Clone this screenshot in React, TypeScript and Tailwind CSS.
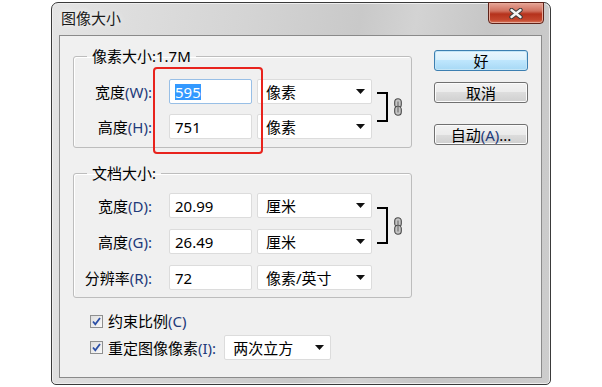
import React from 'react';

const Paren = ({ children }: { children: React.ReactNode }) => (
  <span className="text-[#1e3a7a]">{children}</span>
);

const Arrow = () => (
  <svg width="9" height="5" viewBox="0 0 9 5" className="shrink-0">
    <path d="M0 0 H9 L4.5 5 Z" fill="#111" />
  </svg>
);

const Select = ({ label, className }: { label: React.ReactNode; className: string }) => (
  <div
    className={
      'h-[25px] bg-white border border-[#dcdcdc] rounded-[2px] flex items-center justify-between pl-[8px] pr-[6px] text-[15px] leading-[20px] text-black ' +
      className
    }
  >
    <span>{label}</span>
    <Arrow />
  </div>
);

const Input = ({ value, focus }: { value: React.ReactNode; focus?: boolean }) => (
  <div
    className={
      'w-[83px] h-[25px] bg-white border rounded-[2px] flex items-center pl-[5px] text-[15px] leading-[20px] text-black ' +
      (focus ? 'border-[#98bfe6]' : 'border-[#dcdcdc]')
    }
  >
    {value}
  </div>
);

const Row = ({ label, value, unit, focus }: { label: React.ReactNode; value: React.ReactNode; unit: string; focus?: boolean }) => (
  <div className="flex items-center h-[25px]">
    <div className="w-[78px] text-right text-[15px] leading-[20px] whitespace-nowrap">{label}</div>
    <div className="ml-[17px]">
      <Input value={value} focus={focus} />
    </div>
    <Select label={unit} className="ml-[5px] w-[115px]" />
  </div>
);

const Link = () => (
  <svg width="8" height="18" viewBox="0 0 8 18" className="ml-[6px] shrink-0">
    <rect x="0.7" y="0.7" width="6.6" height="9" rx="3.3" fill="#c4c4c4" stroke="#4a4a4a" strokeWidth="1.1" />
    <rect x="0.7" y="8.3" width="6.6" height="9" rx="3.3" fill="#c4c4c4" stroke="#4a4a4a" strokeWidth="1.1" />
    <line x1="4" y1="3.5" x2="4" y2="14.5" stroke="#6a6a6a" strokeWidth="1.1" />
  </svg>
);

const Check = () => (
  <svg width="13" height="13" viewBox="0 0 13 13" className="shrink-0">
    <defs>
      <linearGradient id="cb" x1="0" y1="0" x2="1" y2="1">
        <stop offset="0" stopColor="#dcdcdc" />
        <stop offset="1" stopColor="#fbfbfb" />
      </linearGradient>
    </defs>
    <rect x="0.5" y="0.5" width="12" height="12" fill="url(#cb)" stroke="#8e8f8f" />
    <path d="M3 6.5 L5.3 9.3 L10 3" fill="none" stroke="#2b4fa6" strokeWidth="1.8" />
  </svg>
);

const Button = ({ children, primary, className }: { children: React.ReactNode; primary?: boolean; className?: string }) => (
  <div
    className={
      'h-[21px] w-[94px] rounded-[3px] border flex items-center justify-center text-[15px] leading-[20px] text-black ' +
      (primary
        ? 'border-[#3c7fb1] bg-[linear-gradient(#eaf6fd_0%,#d9f0fc_50%,#bee6fd_50%,#a7d9f5_100%)] shadow-[inset_0_0_0_1px_#c4e5f6] '
        : 'border-[#707070] bg-[linear-gradient(#f2f2f2_0%,#ebebeb_50%,#dddddd_50%,#cfcfcf_100%)] shadow-[inset_0_0_0_1px_#fbfbfb] ') +
      (className ?? '')
    }
  >
    {children}
  </div>
);

export default function App() {
  return (
    <div className="w-[602px] h-[387px] bg-white pl-[51px] pt-[2px] font-['Noto_Sans','Noto_Sans_CJK_SC',sans-serif] text-black">
      <div className="relative w-[500px] h-[383px] flex flex-col rounded-t-[7px] rounded-b-[5px] border border-[#3a3a3a] bg-[linear-gradient(100deg,#e4e4e4_0%,#d4d4d4_35%,#c9c9c9_55%,#d3d3d3_65%,#c6c6c6_78%,#cdcdcd_100%)] shadow-[inset_0_0_0_1px_#eeeeee]">
        {/* title bar */}
        <div className="h-[32px] flex items-start shrink-0">
          <div className="pl-[9px] pt-[5px] text-[15px] leading-[20px] text-[#1a1a1a] [text-shadow:0_0_6px_#ffffff]">图像大小</div>
          <div className="ml-auto mr-[6px] mt-[-1px] w-[56px] h-[22px] rounded-b-[4px] border border-[#5e2219] bg-[linear-gradient(#e6a597_0%,#d0705e_40%,#b5321c_55%,#c4472e_85%,#d87a5e_100%)] shadow-[inset_0_0_0_1px_#e7a999] flex items-center justify-center">
            <svg width="14" height="11" viewBox="0 0 14 11">
              <path d="M2.5 2 L11.5 9 M11.5 2 L2.5 9" stroke="#3a3a3a" strokeWidth="4.4" strokeLinecap="round" />
              <path d="M2.5 2 L11.5 9 M11.5 2 L2.5 9" stroke="#f4f4f4" strokeWidth="2.4" strokeLinecap="round" />
            </svg>
          </div>
        </div>

        {/* client */}
        <div className="flex-1 pl-[7px] pr-[8px] pb-[6px] flex">
          <div className="flex-1 border border-[#8a8a8a] bg-[#f0f0f0] flex pl-[13px] pt-[10px]">
            <div className="w-[339px] flex flex-col">
              <fieldset className="border border-[#bdbdbd] rounded-[3px] shadow-[inset_1px_1px_0_#ffffff] pt-[13px] pb-[8px]">
                <legend className="ml-[13px] px-[5px] text-[15px] leading-[20px]">像素大小:1.7M</legend>
                <div className="flex">
                  <div className="flex flex-col gap-[10px]">
                    <Row
                      label={<>宽度<Paren>(W):</Paren></>}
                      value={<span className="bg-[#3399ff] text-white leading-[16px]">595</span>}
                      unit="像素"
                      focus
                    />
                    <Row label={<>高度<Paren>(H):</Paren></>} value="751" unit="像素" />
                  </div>
                  <div className="ml-[5px] mt-[13px] flex items-center self-start">
                    <div className="w-[11px] h-[30px] border-t-2 border-r-2 border-b-2 border-black" />
                    <Link />
                  </div>
                </div>
              </fieldset>

              <fieldset className="mt-[15px] border border-[#bdbdbd] rounded-[3px] shadow-[inset_1px_1px_0_#ffffff] pt-[10px] pb-[7px]">
                <legend className="ml-[13px] px-[5px] text-[15px] leading-[20px]">文档大小:</legend>
                <div className="flex">
                  <div className="flex flex-col gap-[11px]">
                    <Row label={<>宽度<Paren>(D):</Paren></>} value="20.99" unit="厘米" />
                    <Row label={<>高度<Paren>(G):</Paren></>} value="26.49" unit="厘米" />
                    <Row label={<>分辨率<Paren>(R):</Paren></>} value="72" unit="像素/英寸" />
                  </div>
                  <div className="ml-[5px] mt-[14px] flex items-center self-start">
                    <div className="w-[11px] h-[37px] border-t-2 border-r-2 border-b-2 border-black" />
                    <Link />
                  </div>
                </div>
              </fieldset>

              <div className="mt-[13px] pl-[17px] flex items-center h-[20px] gap-[5px] text-[15px] leading-[20px]">
                <Check />
                <span>约束比例<Paren>(C)</Paren></span>
              </div>
              <div className="mt-[4px] pl-[17px] flex items-center h-[25px] text-[15px] leading-[20px]">
                <Check />
                <span className="ml-[5px]">重定图像像素<Paren>(I):</Paren></span>
                <Select label="两次立方" className="ml-[8px] w-[107px] pl-[7px] pr-[4px]" />
              </div>
            </div>

            <div className="ml-[22px] pt-[4px] flex flex-col">
              <Button primary>好</Button>
              <Button className="mt-[11px]">取消</Button>
              <Button className="mt-[21px]">
                <span>自动<Paren>(A)</Paren>...</span>
              </Button>
            </div>
          </div>
        </div>

        {/* red highlight marker */}
        <div className="absolute left-[101px] top-[64px] w-[110px] h-[87px] border-2 border-[#e8231d] rounded-[4px]" />
      </div>
    </div>
  );
}
